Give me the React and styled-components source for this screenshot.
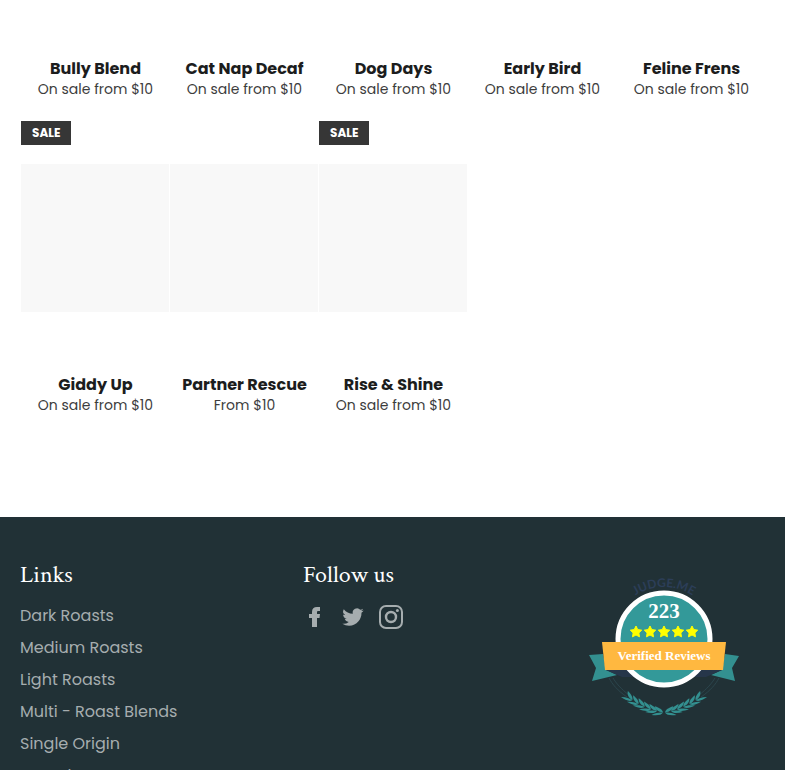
import React from "react";
import styled, { createGlobalStyle } from "styled-components";

const previousRow = [
  { name: "Bully Blend", price: "On sale from $10" },
  { name: "Cat Nap Decaf", price: "On sale from $10" },
  { name: "Dog Days", price: "On sale from $10" },
  { name: "Early Bird", price: "On sale from $10" },
  { name: "Feline Frens", price: "On sale from $10" },
];

const products = [
  { name: "Giddy Up", price: "On sale from $10", sale: true },
  { name: "Partner Rescue", price: "From $10" },
  { name: "Rise & Shine", price: "On sale from $10", sale: true },
];

const links = [
  "Dark Roasts",
  "Medium Roasts",
  "Light Roasts",
  "Multi - Roast Blends",
  "Single Origin",
  "Samples",
];

const starCenters = [47, 61, 75, 89, 103];

const leaves = [
  [-35, 124, 36],
  [-29, 128, 31],
  [-23, 131, 26],
  [-17, 134, 21],
  [-11, 136, 15],
  [-5, 138, 8],
];

function Star({ cx, cy }) {
  const points = [];
  for (let i = 0; i < 10; i++) {
    const r = i % 2 ? 3 : 6;
    const a = (Math.PI / 5) * i - Math.PI / 2;
    points.push(`${cx + r * Math.cos(a)},${cy + r * Math.sin(a)}`);
  }
  return <polygon points={points.join(" ")} fill="#ffff00" strokeLinejoin="round" stroke="#ffff00" />;
}

function Branch() {
  return (
    <g fill="#339090">
      <path d="M-55 104C-52 110-46 117-37 123M-51 104C-48 109-43 115-35 121" fill="none" stroke="#2b454c" />
      {leaves.map(([x, y, angle]) => (
        <g key={x} transform={`translate(${x} ${y}) rotate(${angle})`}>
          <path d="M4 0C3-3 0-4-5-5C-4-2-1 0 4 0Z" />
          <path d="M4 0C1 0-3 1-7 4C-2 4 3 3 4 0Z" />
        </g>
      ))}
    </g>
  );
}

function ReviewBadge() {
  return (
    <Badge viewBox="0 0 150 150" role="img" aria-label="223 verified reviews">
      <defs>
        <path id="arc" d="M23 65A52 52 0 0 1 127 65" />
      </defs>
      <BadgeArc>
        <textPath href="#arc" startOffset="50%">
          JUDGE.ME
        </textPath>
      </BadgeArc>
      <path d="M0 81L14 80L17 96L28 101L3 107L7 94Z" fill="#339090" />
      <path d="M150 82L136 80L133 96L122 101L146 107L143 94Z" fill="#339090" />
      <path d="M17 96H43L48 103H33Z" fill="#26364a" />
      <path d="M133 96H107L102 103H117Z" fill="#26364a" />
      <circle cx="75" cy="65" r="46" fill="#339999" stroke="#fff" strokeWidth="5" />
      <path d="M13 68H137L134 96H16Z" fill="#ffb840" />
      {starCenters.map((x) => (
        <Star key={x} cx={x} cy={58} />
      ))}
      <g transform="translate(75 0)">
        <Branch />
      </g>
      <g transform="translate(75 0) scale(-1 1)">
        <Branch />
      </g>
      <BadgeText x="75" y="44" $size={21}>
        223
      </BadgeText>
      <BadgeText x="75" y="86" $size={13}>
        Verified Reviews
      </BadgeText>
    </Badge>
  );
}

function Product({ product, image }) {
  return (
    <Card>
      {image && (
        <Media>
          {product.sale && <Sale>SALE</Sale>}
          <Placeholder />
        </Media>
      )}
      <ProductLink href="#">
        <ProductName>{product.name}</ProductName>
        <Price>{product.price}</Price>
      </ProductLink>
    </Card>
  );
}

export default function App() {
  return (
    <>
      <GlobalStyle />
      <Collection>
        <Grid>
          {previousRow.map((product) => (
            <Product key={product.name} product={product} />
          ))}
        </Grid>
        <Grid>
          {products.map((product) => (
            <Product key={product.name} product={product} image />
          ))}
        </Grid>
      </Collection>
      <Footer>
        <div>
          <FooterTitle>Links</FooterTitle>
          <LinkList>
            {links.map((link) => (
              <li key={link}>
                <FooterLink href="#">{link}</FooterLink>
              </li>
            ))}
          </LinkList>
        </div>
        <div>
          <FooterTitle>Follow us</FooterTitle>
          <Social>
            <SocialLink href="#" aria-label="Facebook">
              <svg width="24" height="24" viewBox="0 0 24 24">
                <path d="M9 22V13H6V9H9V7C9 3.800 10.800 2 14 2H17V6H15.300C14.200 6 14 6.500 14 7.500V9H17L16.500 13H14V22Z" />
              </svg>
            </SocialLink>
            <SocialLink href="#" aria-label="Twitter">
              <svg width="24" height="24" viewBox="-1.500 -1.500 27 27">
                <path d="M23.950 4.570a10 10 0 0 1-2.820.770 4.960 4.960 0 0 0 2.160-2.720 9.990 9.990 0 0 1-3.120 1.190 4.920 4.920 0 0 0-8.390 4.480A13.930 13.930 0 0 1 1.640 3.160a4.920 4.920 0 0 0 1.520 6.570 4.900 4.900 0 0 1-2.230-.610v.060a4.920 4.920 0 0 0 3.950 4.830 5 5 0 0 1-2.210.080 4.940 4.940 0 0 0 4.600 3.420A9.870 9.870 0 0 1 0 19.540a13.990 13.990 0 0 0 7.550 2.210c9.050 0 14-7.500 14-13.980 0-.210 0-.420-.020-.630a9.940 9.940 0 0 0 2.460-2.550z" />
              </svg>
            </SocialLink>
            <SocialLink href="#" aria-label="Instagram">
              <svg width="24" height="24" viewBox="0 0 24 24">
                <rect x="1" y="1" width="22" height="22" rx="6" fill="none" stroke="currentColor" strokeWidth="2" />
                <circle cx="12" cy="12" r="5" fill="none" stroke="currentColor" strokeWidth="2.400" />
                <circle cx="18.400" cy="5.600" r="1.500" />
              </svg>
            </SocialLink>
          </Social>
        </div>
        <ReviewBadge />
      </Footer>
    </>
  );
}

const GlobalStyle = createGlobalStyle`
  * {
    box-sizing: border-box;
  }
  body {
    margin: 0;
    background: #fff;
    color: #1c1d1d;
    font-family: Poppins, Inter, "Open Sans", sans-serif;
  }
`;
const Collection = styled.main`
  padding: 58px 19px 101px 21px;
`;
const Grid = styled.div`
  display: grid;
  grid-template-columns: repeat(5, 1fr);
  & + & {
    margin-top: 21px;
  }
`;
const Card = styled.article`
  min-width: 0;
  text-align: center;
`;
const Media = styled.div`
  position: relative;
  padding: 43px 0 62px;
`;
const Placeholder = styled.div`
  aspect-ratio: 1;
  margin-right: 1px;
  background: #f8f8f8;
`;
const Sale = styled.span`
  position: absolute;
  top: 0;
  left: 0;
  padding: 0 11px;
  background: #363636;
  color: #fff;
  font-size: 12px;
  font-weight: 700;
  line-height: 24px;
`;
const ProductLink = styled.a`
  display: block;
  color: inherit;
  text-decoration: none;
`;
const ProductName = styled.h2`
  margin: 0;
  font-size: 16px;
  font-weight: 700;
  line-height: 21px;
  white-space: nowrap;
`;
const Price = styled.p`
  margin: 0;
  color: #3d3d3d;
  font-size: 14px;
  line-height: 21px;
`;
const Footer = styled.footer`
  display: grid;
  grid-template-columns: 38% 38% 1fr;
  padding: 44px 20px;
  background: #213136;
`;
const FooterTitle = styled.h3`
  margin: 0 0 11px;
  color: #fff;
  font-family: "Crimson Text", "Liberation Serif", serif;
  font-size: 24px;
  font-weight: 400;
  line-height: 28px;
`;
const LinkList = styled.ul`
  margin: 0;
  padding: 0;
  list-style: none;
`;
const FooterLink = styled.a`
  color: #a6adaf;
  font-size: 16px;
  line-height: 32px;
  text-decoration: none;
`;
const Social = styled.div`
  display: flex;
  gap: 14px;
  padding-top: 5px;
`;
const SocialLink = styled.a`
  height: 24px;
  color: #a6adaf;
  svg {
    display: block;
    fill: currentColor;
  }
`;
const Badge = styled.svg`
  width: 150px;
  height: 150px;
  margin: 13px 0 0 3px;
`;
const BadgeArc = styled.text`
  fill: #2c3e58;
  font-family: Lato, sans-serif;
  font-size: 12px;
  font-weight: 700;
  text-anchor: middle;
`;
const BadgeText = styled.text`
  fill: #fff;
  font-family: "Liberation Serif", serif;
  font-size: ${(props) => props.$size}px;
  font-weight: 700;
  text-anchor: middle;
`;
